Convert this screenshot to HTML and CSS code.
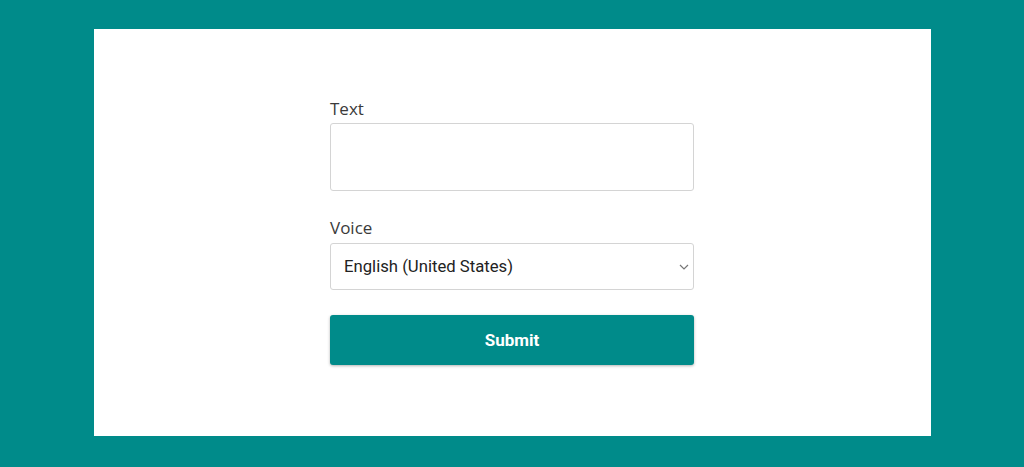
FILE: index.html
```html
<!DOCTYPE html>
<html lang="en">
<head>
  <meta charset="UTF-8">
  <meta name="viewport" content="width=device-width, initial-scale=1.0">
  <title>Text to Speech</title>
  <link rel="stylesheet" href="styles.css">
</head>
<body>

<div class="card">
  <form class="tts-form">
    <label for="text">Text</label>
    <textarea id="text"></textarea>

    <label for="voice" class="voice-label">Voice</label>
    <div class="select-wrap">
      <select id="voice">
        <option>English (United States)</option>
      </select>
      <svg class="chevron" width="10" height="6" viewBox="0 0 10 6">
        <path d="M1 1 L5 5 L9 1" fill="none" stroke="#777" stroke-width="1.2"/>
      </svg>
    </div>

    <button type="submit" class="submit">Submit</button>
  </form>
</div>

</body>
</html>
```

FILE: styles.css
```css
body {
  margin: 0;
  background-color: #008b8a;
}
.card {
  width: 837px;
  margin: 29px auto 0;
  background-color: #fff;
  padding: 68px 0 71px;
  box-sizing: border-box;
  height: 407px;
}
.tts-form {
  width: 364px;
  margin: 0 auto;
  display: flex;
  flex-direction: column;
}
label {
  font-family: "Open Sans", sans-serif;
  font-size: 17px;
  font-weight: 500;
  line-height: 24px;
  color: #3a3a3a;
  margin-bottom: 2px;
}
.voice-label {
  margin-bottom: 3px;
}
textarea {
  height: 68px;
  box-sizing: border-box;
  border: 1px solid #d4d4d4;
  border-radius: 3px;
  resize: none;
  margin: 0 0 25px;
  padding: 8px 12px;
}
.select-wrap {
  position: relative;
  margin-bottom: 25px;
}
select {
  width: 100%;
  height: 47px;
  box-sizing: border-box;
  border: 1px solid #d4d4d4;
  border-radius: 3px;
  background-color: #fff;
  padding: 0 13px;
  font-family: Roboto, sans-serif;
  font-size: 16.7px;
  color: #222;
  appearance: none;
  -webkit-appearance: none;
  outline: none;
}
.chevron {
  position: absolute;
  right: 5px;
  top: 21px;
  pointer-events: none;
}
.submit {
  height: 50px;
  border: none;
  border-radius: 3px;
  background-color: #008b8a;
  color: #fff;
  font-family: Roboto, sans-serif;
  font-weight: bold;
  font-size: 17px;
  box-shadow: 0 1px 3px rgba(0, 0, 0, 0.3);
}
```
